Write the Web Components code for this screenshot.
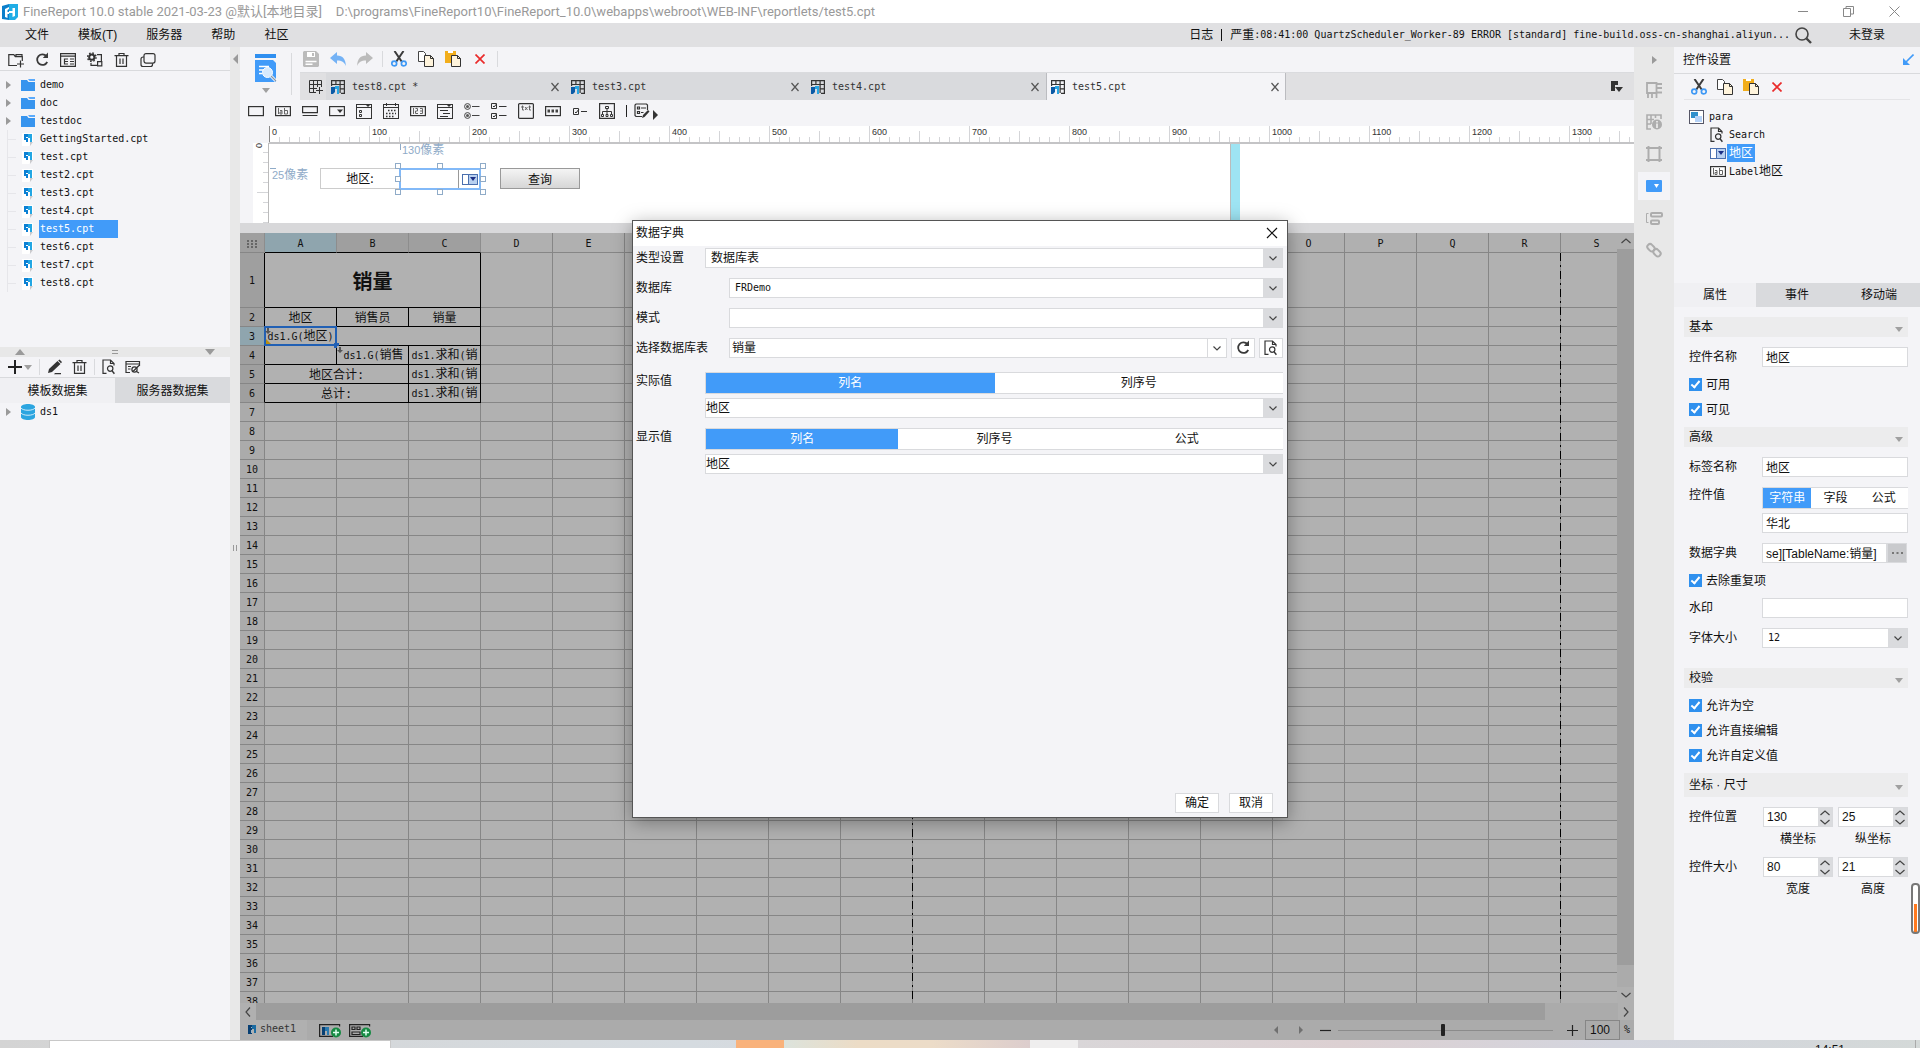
<!DOCTYPE html>
<html lang="zh-CN">
<head>
<meta charset="utf-8">
<title>FineReport 10.0</title>
<style>
html,body{margin:0;height:100%;overflow:hidden}
body{font:12px/16px "Liberation Sans","Noto Sans CJK SC",sans-serif;color:#111;--mono:10px/16px "DejaVu Sans Mono","Noto Sans CJK SC",monospace;--blue:#419bf9;--panel:#f4f4f7;--line:#d9dadd}
</style>
</head>
<body>
<fine-report-app></fine-report-app>
<script>
const BASE = `
*,*::before,*::after{box-sizing:border-box}
:host{display:block}
button,input,select{font:inherit;color:inherit;margin:0;padding:0;border:0;background:none;border-radius:0;outline:0;min-width:0}
button{display:flex;align-items:center;justify-content:center}
x-icon{flex:none}
.mono{font:var(--mono)}
.cjk{font-size:12px}
`;
const CONTROLS = `
.box{height:20px;border:1px solid var(--line);background:#fff;padding:0 3px;width:100%}
.combo{display:grid;height:20px;border:1px solid var(--line);background:#fff;flex:1;min-width:0}
.combo select{grid-area:1/1;appearance:none;width:100%;height:18px;padding:0 24px 0 5px}
.combo i{grid-area:1/1;justify-self:end;width:19px;height:18px;background:#dadbde;pointer-events:none;display:flex;align-items:center;justify-content:center}
.combo.plain i{background:#fff;border-left:1px solid var(--line)}
`;
function define(name, css, html, after){
  const tpl = document.createElement('template');
  customElements.define(name, class extends HTMLElement{
    connectedCallback(){
      if(this.shadowRoot) return;
      const root = this.attachShadow({mode:'open'});
      tpl.innerHTML = `<style>${BASE}${css}</style>` + (typeof html === 'function' ? html(this) : html);
      root.append(tpl.content.cloneNode(true));
      if(after) after(root, this);
    }
  });
}

/* ---------- icons ---------- */
const doc = '<path fill="#fff" d="M1 0h11v9l-4 4H1z"/><path fill="#c9c9cc" d="M9 9h3l-3 4z"/><path fill="#0b80d4" d="M3 1h4v3H5v1h2v4H5V7H3z"/><path fill="#22a6e3" d="M7 1h4v8H9V5H7z"/>';
const frm = '<rect x=".5" y="1.5" width="15" height="14" fill="none" stroke="#333"/>';
const ICON = {
logo:[16,16,'<path fill="#0b7fcb" d="M0 2 7 0v16l-7-1z"/><path fill="#20ade6" d="M7 0h9v13l-3 3H7z"/><path fill="#fff" d="M3 5l4-2v2l-1.500 1v2H7v2H5.500v4L3 13zM7 7h3.500V4H13v8l-2.500 1V9H7z"/>'],
minilogo:[10,10,'<path fill="#073f73" d="M0 1h4v9H0z"/><path fill="#1a6ba2" d="M4 1h4v8H6V5H4z"/><path fill="#9fb5c2" d="M3 3h1v1H3zM3 6h1v3H3z"/>'],
newdir:[16,16,'<path fill="none" stroke="#333" stroke-width="1.200" d="M9 13.500H.8V2.600h5l1.500 2h7V9M8 4.600V2.600h6v2M12.500 8.500v7M9 12h7"/>'],
refresh:[14,16,'<path fill="none" stroke="#3a3a3a" stroke-width="1.800" d="M11.500 4.200A5.300 5.300 0 1 0 12.200 10"/><path fill="#3a3a3a" d="M13 .500v5.500H7.800z"/>'],
list:[16,16,'<path fill="none" stroke="#333" stroke-width="1.200" d="M.6 1.600h14.800v12.800H.6zM.6 4.200h14.800M4.500 6.500v6M4.500 7h3.500M4.500 9.500h3.500M4.500 12h3.500M10 7h4M10 9.500h4M10 12h4"/>'],
gear:[16,16,'<circle cx="4.800" cy="5.200" r="2.600" fill="none" stroke="#333" stroke-width="2"/><circle cx="4.800" cy="5.200" r="4.200" fill="none" stroke="#333" stroke-width="1.500" stroke-dasharray="1.600 1.700"/><path fill="none" stroke="#333" stroke-width="1.200" d="M10 2.600h4.400v7M4 11v2.400h6.500M10.600 9.600h4.200v4.200h-4.200z"/>'],
trash:[15,16,'<path fill="none" stroke="#333" stroke-width="1.200" d="M.5 3.600h14M5 3.500v-2h5v2M2.500 4v10.400h10V4M6 6.500v5.500M9 6.500v5.500"/>'],
copies:[16,16,'<rect x="4" y="1.600" width="11" height="9.500" rx="2" fill="none" stroke="#333" stroke-width="1.200"/><path fill="none" stroke="#333" stroke-width="1.200" d="M4 5H3a2 2 0 0 0-2 2v5.500a2 2 0 0 0 2 2h7.500a2 2 0 0 0 2-2v-1.200"/>'],
folder:[14,12,'<path fill="#3794ee" d="M0 1h6l1.500 2H14v9H0z"/><path fill="#5aaafc" d="M7 0h7v2H8.500z"/>'],
doc:[13,13,doc],
tri:[5,8,'<path fill="#9a9a9a" d="M0 0l5 4-5 4z"/>'],
triG:[5,8,'<path fill="#707070" d="M0 0l4 4-4 4z"/>'],
triL:[5,10,'<path fill="#9a9a9a" d="M5 0v10L0 5z"/>'],
triU:[10,6,'<path fill="#9a9a9a" d="M0 6l5-6 5 6z"/>'],
triD:[10,6,'<path fill="#9a9a9a" d="M0 0h10L5 6z"/>'],
triDs:[8,5,'<path fill="#a0a0a0" d="M0 0h8L4 5z"/>'],
eq:[6,4,'<path stroke="#999" d="M0 .5h6M0 3.500h6"/>'],
bars:[4,6,'<path stroke="#999" d="M.5 0v6M3.500 0v6"/>'],
plus:[14,14,'<path stroke="#222" stroke-width="2" d="M7 0v14M0 7h14"/>'],
pencil:[16,16,'<path fill="#333" d="M1 14l1-4 8.500-8 3 3L5 13z"/><path fill="#333" d="M11.200 1.500l1.300-1 2.500 2.500-1 1.300zM8 14h6v1.200H7z"/>'],
docfind:[14,16,'<path fill="none" stroke="#333" stroke-width="1.200" d="M4.500 14.400H1V1h7.500l3.500 3.500v2M8.500 1v3.500H12"/><circle cx="8.200" cy="9.600" r="2.700" fill="none" stroke="#333" stroke-width="1.200"/><path stroke="#333" stroke-width="1.400" d="M10 11.700l2.400 3"/>'],
panelgear:[16,16,'<path fill="none" stroke="#333" stroke-width="1.200" d="M5 13.500H1v-11h13.500V7M1 5h13.500M3 7.500h3M3 10h2.500"/><circle cx="9.500" cy="10.500" r="2.600" fill="none" stroke="#333" stroke-width="1.200"/><path stroke="#333" stroke-width="1.300" d="M8 12.500l6-6M11.500 12.500l2.500 1.500"/>'],
db:[14,16,'<path fill="#2ba5e0" d="M0 3c0-4 14-4 14 0v10c0 4-14 4-14 0z"/><path fill="none" stroke="#cfeafa" d="M0 4c2 3 12 3 14 0M0 9c2 3 12 3 14 0"/>'],
preview:[22,30,'<path fill="#2f8ff0" d="M0 0h21v4H0z"/><path fill="#419bf9" d="M0 6h18l3 3v19H0z"/><path stroke="#fff" stroke-width="1.500" d="M4 12.500h10M4 16h5M4 19.500h3"/><circle cx="12.500" cy="18.500" r="5" fill="#d6e9fd" stroke="#fff"/><path stroke="#fff" stroke-width="3" d="M16 22l5 5"/><path stroke="#8a98a8" stroke-width="1.200" d="M16 22l5 5"/>'],
save:[16,16,'<path fill="#bbb" d="M0 1l1-1h12l3 3v12l-1 1H1l-1-1z"/><path fill="#fff" d="M4 1h8v5H4z"/><path fill="#bbb" d="M9 2h2v3H9z"/><path stroke="#fff" stroke-width="1.500" d="M2.500 10.500h11M2.500 13.200h7"/>'],
undo:[16,16,'<path fill="#74b2f5" d="M0 7l7-6v3.500c6 0 8.500 4 9 10.500-2-4-4-5.500-9-5.500V13z"/>'],
redo:[16,16,'<path fill="#bbb" d="M16 7L9 1v3.500C3 4.500.5 8.500 0 15c2-4 4-5.500 9-5.500V13z"/>'],
cut:[16,16,'<path stroke="#3b3b3b" stroke-width="2" d="M3.500 0l7.500 11M12.500 0L5 11"/><circle cx="3.200" cy="12.500" r="2.400" fill="none" stroke="#3f99f5" stroke-width="1.700"/><circle cx="12.800" cy="12.500" r="2.400" fill="none" stroke="#3f99f5" stroke-width="1.700"/>'],
copy:[16,16,'<path fill="#fff" stroke="#444" d="M.5.5h5l2 2v8h-7z"/><path fill="#fff4dc" stroke="#333" d="M6.500 4.500h6l3 3v8h-9z"/><path fill="none" stroke="#333" d="M12.500 4.500v3h3"/>'],
paste:[16,16,'<path fill="#f2ae1c" d="M0 0h11v12H0z"/><path fill="#fff" d="M3 0h5v2H3z"/><path fill="#fff4dc" stroke="#333" d="M6.500 4.500h6l3 3v8h-9z"/><path fill="none" stroke="#333" d="M12.500 4.500v3h3"/>'],
del:[10,10,'<path stroke="#ea2b2b" stroke-width="1.700" d="M.5.500l9 9M9.500.500l-9 9"/>'],
addtab:[14,14,'<path fill="none" stroke="#333" d="M7 12.500H.5V.500h12V7M.5 4.500h12M.5 8.500H8M4.500.500v12M8.500.500V7M10.500 7v7M7 10.500h7"/>'],
sheet:[14,14,'<path fill="none" stroke="#333" stroke-width="1.200" d="M.6 6V.600h12.800v12.800H10M.6 4.500h12.800M4.900.600v4M9.100.600V13M9 8.900h4.400"/><path fill="#0b5aa6" d="M0 7h4v5l-2 2H0z"/><path fill="#29a6e3" d="M4 6h4v8H6V9H4z"/>'],
close:[10,10,'<path stroke="#555" stroke-width="1.200" d="M1.500 1l7 8M8.500 1l-7 8"/>'],
tabmenu:[12,12,'<path fill="#333" d="M0 0h7v4H4v6H0z"/><path fill="#333" d="M4 6h8L8 11z"/>'],
w_box:[16,16,'<rect x=".6" y="3.600" width="14.800" height="9" fill="none" stroke="#333" stroke-width="1.200"/>'],
w_label:[16,16,'<rect x=".6" y="3.600" width="14.800" height="9" fill="none" stroke="#333" stroke-width="1.200"/><path fill="none" stroke="#666" d="M3.500 5v6M5 7.500h2V11H5V9h2M9.500 5v6h3V7.500h-3"/>'],
w_pass:[16,16,'<path fill="none" stroke="#333" stroke-width="1.200" d="M.6 3.600h14.800v6H.6zM.6 12.500h14.800"/>'],
w_combo:[16,16,'<rect x=".6" y="3.600" width="14.800" height="9" fill="none" stroke="#333" stroke-width="1.200"/><path fill="#333" d="M8 6.500h6L11 10z"/>'],
w_tree:[16,17,frm+'<path fill="none" stroke="#333" d="M.5 4.500h15M3.500 7.500h2v2h-2zM3.500 11.500h2v2h-2z"/><path fill="#333" d="M10 2h4l-2 2z"/>'],
w_date:[16,17,frm+'<path stroke="#333" d="M.5 4.500h15M3.500 0v3M12.500 0v3"/><path stroke="#333" stroke-width="1.500" stroke-dasharray="1.500 1.500" d="M5 7.500h8M3 10.500h10M3 13.500h8"/>'],
w_num:[16,16,'<rect x=".6" y="3.600" width="14.800" height="9" fill="none" stroke="#333" stroke-width="1.200"/><path fill="none" stroke="#666" d="M3.500 5v6M5.500 5.500h2v2.500h-2v2.500h2.500M10 5.500h2.500v5H10M10 8h2.500"/>'],
w_view:[16,17,frm+'<path stroke="#333" d="M.5 4.500h15M3 7.500h8M6 10.500h7M3 13.500h8"/><path fill="#333" d="M10 2h4l-2 2z"/>'],
w_radio:[16,16,'<g fill="none" stroke="#444"><circle cx="3.500" cy="3.500" r="2.900"/><circle cx="3.500" cy="12.500" r="2.900"/><path d="M8 3.500h7.500M8 12.500h7.500"/></g><g fill="#555"><circle cx="3.500" cy="3.500" r="1.500"/><circle cx="3.500" cy="12.500" r="1.500"/></g>'],
w_checks:[16,16,'<path fill="none" stroke="#333" d="M.5.500h5v5h-5zM.5 10.500h5v5h-5zM2 3l1 1 2.500-3M2 13l1 1 2.500-3M8 3.500h7.500M8 12.500h7.500"/>'],
w_text:[16,16,'<rect x=".6" y=".6" width="14.800" height="14.800" rx="1" fill="none" stroke="#333" stroke-width="1.200"/><path fill="none" stroke="#666" d="M4.500 2.500V7H6M3 4h3M7 4l2.500 3M9.500 4L7 7M11.500 2.500V7H13M10.500 4H13"/>'],
w_pwd:[16,16,'<rect x=".6" y="3.600" width="14.800" height="9" fill="none" stroke="#333" stroke-width="1.200"/><path stroke="#444" stroke-width="3" stroke-dasharray="2.500 1.500" d="M2.500 8h11"/>'],
w_check:[16,16,'<path fill="none" stroke="#333" d="M1.500 5.500h5v6h-5zM3 9l1 1 3-4M9 8.500h6"/>'],
w_org:[16,16,'<rect x=".6" y=".6" width="14.800" height="14.800" fill="none" stroke="#333" stroke-width="1.200"/><path fill="none" stroke="#333" d="M6.500 3.500h3v2h-3zM8 5.500V11M3.500 11V8.500h9V11M2.500 11.500h2v2h-2zM7 11.500h2v2H7zM11.500 11.500h2v2h-2z"/>'],
w_form:[16,16,'<path fill="none" stroke="#333" stroke-width="1.200" d="M8 13.500H2l-1-1V2l1-1h10.500l1 1v5M3.500 4h2v2h-2zM7 5h5M3.500 8.500h2v2h-2zM7 9.500h2.500"/><path fill="#333" d="M8 15l1-3 5-5 1.500 1.500-5 5.500z"/>'],
r_tri:[5,10,'<path fill="#333" d="M0 0l5 5-5 5z"/>'],
chev:[8,5,'<path fill="none" stroke="#444" stroke-width="1.200" d="M.5.500L4 4 7.500.500"/>'],
chevU:[10,6,'<path fill="none" stroke="#444" stroke-width="1.200" d="M.5 5L5 1l4.500 4"/>'],
chevD:[10,6,'<path fill="none" stroke="#444" stroke-width="1.200" d="M.5 1L5 5l4.500-4"/>'],
chevL:[6,10,'<path fill="none" stroke="#444" stroke-width="1.200" d="M5 .500L1 5l4 4.500"/>'],
chevR:[6,10,'<path fill="none" stroke="#444" stroke-width="1.200" d="M1 .500L5 5 1 9.500"/>'],
x:[12,12,'<path stroke="#111" stroke-width="1.200" d="M1 1l10 10M11 1L1 11"/>'],
winmin:[10,11,'<path stroke="#888" d="M0 5.500h10"/>'],
winmax:[11,11,'<path fill="none" stroke="#888" d="M.5 2.500h7v8h-7zM3 2V.500h7.500V8H8"/>'],
winx:[11,11,'<path stroke="#888" d="M.5.500l10 10M10.500.500l-10 10"/>'],
search:[17,17,'<circle cx="7" cy="7" r="6" fill="none" stroke="#444" stroke-width="1.600"/><path stroke="#444" stroke-width="2.400" d="M11.500 11.500l4.500 4.500"/>'],
pin:[12,12,'<path stroke="#419bf9" stroke-width="1.600" d="M11.500.500L3 9"/><path fill="#419bf9" d="M1 4v7h7z"/>'],
para:[15,15,'<rect x=".5" y=".5" width="14" height="13" fill="#fff" stroke="#556"/><path fill="#2f8fcc" d="M2 2h7v6H2z"/><path fill="#b5d2f8" d="M6 6h7v6H6z"/>'],
combosel:[16,11,'<rect x=".5" y=".5" width="15" height="10" fill="#fff" stroke="#4a6fae"/><path fill="#b8d0f0" stroke="#4a6fae" d="M6.500.500h9v10h-9z"/><path fill="#1b2f86" d="M8 3h6l-3 4z"/>'],
lab:[16,11,'<rect x=".6" y=".6" width="14.800" height="9.800" fill="#fff" stroke="#333" stroke-width="1.200"/><path fill="none" stroke="#666" d="M3.500 2v6.500M5 4.500h2v4H5V6.500h2M9.500 2v6.500h3v-4h-3"/>'],
s1:[16,16,'<path fill="none" stroke="#adadad" stroke-width="1.800" d="M1 11V1h9.500v10zM10 2h6M10 6h6M10 10.500h6M2 11v5M6 11v5M10.500 11v5"/>'],
s2:[16,16,'<path fill="none" stroke="#adadad" stroke-width="1.600" d="M5 15H1V1h14v4M1 5.500h7M5 1v9M1 10h4M9.500 1v3"/><circle cx="11" cy="10.500" r="5" fill="#adadad"/><path stroke="#e8e8e8" stroke-width="1.800" d="M11 7v1.500M11 9.500V14"/>'],
s3:[16,16,'<path fill="none" stroke="#adadad" stroke-width="2" d="M2.500 0v16M13.500 0v16M0 2h16M0 14h16"/>'],
s4:[16,12,'<rect width="16" height="12" rx="1" fill="#419bf9"/><path fill="#fff" d="M8 4h5l-2.500 4z"/>'],
s5:[17,13,'<path fill="none" stroke="#adadad" d="M2.500 1.500h-2v9h2"/><rect x="5" y="1" width="11" height="3.500" rx="1" fill="none" stroke="#adadad" stroke-width="2"/><rect x="5" y="8.500" width="8" height="3.500" rx="1" fill="none" stroke="#adadad" stroke-width="2"/>'],
s6:[16,16,'<g fill="none" stroke="#adadad" stroke-width="2"><rect x="1" y="3" width="8" height="5.500" rx="2.700" transform="rotate(45 5 5.700)"/><rect x="7" y="8" width="8" height="5.500" rx="2.700" transform="rotate(45 11 10.700)"/></g>'],
dots:[10,8,'<path fill="#666" d="M0 0h2v2H0zM4 0h2v2H4zM8 0h2v2H8zM0 3h2v2H0zM4 3h2v2H4zM8 3h2v2H8zM0 6h2v2H0zM4 6h2v2H4zM8 6h2v2H8z"/>'],
addsheet:[22,15,'<path fill="none" stroke="#222" stroke-width="1.200" d="M14 13.400H.6V1.600h20v2"/><path fill="#073f73" d="M3 4h3v8H3z"/><path fill="#2a7ab0" d="M6 4h4v8H8V8H6z"/><circle cx="17" cy="9.500" r="5" fill="#168a43"/><path stroke="#dfe" stroke-width="1.500" d="M17 6.500v6M14 9.500h6"/>'],
addform:[22,15,'<path fill="none" stroke="#222" stroke-width="1.200" d="M14 13.400H.6V1.600h20v2M3 4h3v2.500H3zM8 4h3v2.500H8zM3 9h8v2.500H3z"/><circle cx="17" cy="9.500" r="5" fill="#168a43"/><path stroke="#dfe" stroke-width="1.500" d="M17 6.500v6M14 9.500h6"/>'],
minus:[11,11,'<path stroke="#222" stroke-width="1.200" d="M0 5.500h11"/>'],
plusS:[11,11,'<path stroke="#222" stroke-width="1.200" d="M0 5.500h11M5.500 0v11"/>'],
ell:[11,3,'<path fill="#777" d="M0 0h2v2H0zM4.500 0h2v2h-2zM9 0h2v2H9z"/>'],
expandmark:[6,6,'<path fill="#555" d="M2 0h2v3h2L3 6 0 3h2z"/>']
};
define('x-icon', ':host{display:inline-flex}svg{display:block}', el => {
  const [w,h,p] = ICON[el.getAttribute('name')];
  return `<svg width="${w}" height="${h}" viewBox="0 0 ${w} ${h}" aria-hidden="true">${p}</svg>`;
});
const ic = n => `<x-icon name="${n}"></x-icon>`;
const ib = (n,t='') => `<button type="button" aria-label="${n}" ${t}>${ic(n)}</button>`;

/* ---------- small controls ---------- */
define('ui-check', `label{display:flex;align-items:center;gap:4px;height:13px}
input{appearance:none;width:13px;height:13px;background:#2f90ee;display:grid;place-items:center;flex:none}
input:checked::after{content:"";width:5px;height:9px;border:solid #fff;border-width:0 2px 2px 0;transform:rotate(40deg);margin-bottom:2px}`,
'<label><input type="checkbox" checked><slot></slot></label>');

define('ui-segment', `:host{flex:1;min-width:0}div{display:flex;height:22px;border:1px solid var(--line);border-right:0;background:#fff}
button{flex:1}button[aria-pressed=true]{background:var(--blue);color:#fff}`,
el => '<div role="group">' + el.getAttribute('items').split(',').map((t,i)=>`<button type="button" aria-pressed="${i===0}">${t}</button>`).join('') + '</div>');

define('ui-spin', `:host{flex:1;min-width:0}.s{display:flex;height:20px;border:1px solid var(--line);background:#fff}
input{flex:1;width:20px;padding-left:3px;appearance:textfield}input::-webkit-inner-spin-button{appearance:none}
.b{display:flex;flex-direction:column;width:14px;background:#dadbde}.b button{flex:1}
label{display:block;text-align:center;margin-top:4px}`,
el => `<div class="s"><input id="n" type="number" value="${el.getAttribute('value')}"><div class="b">${ib('chevU')}${ib('chevD')}</div></div><label for="n">${el.getAttribute('label')}</label>`);

define('tree-item', `:host{display:flex;height:18px;align-items:center;font:var(--mono)}
.a{width:16px;display:flex;flex:none;padding-left:6px}:host([leaf]) .a{align-self:stretch;padding:0}
:host([leaf]) .a::before{content:"";flex:1;margin-left:7px;border-left:1px solid #e6e6ea;background:linear-gradient(#e6e6ea,#e6e6ea) 0 9px/100% 1px no-repeat}
.i{width:23px;display:flex;justify-content:center;flex:none}
.t{height:18px;line-height:18px;padding:0 1px}:host([selected]) .t{background:var(--blue);color:#fff;padding-right:24px}`,
el => `<span class="a">${el.hasAttribute('leaf')?'':ic('tri')}</span><span class="i">${ic(el.getAttribute('icon'))}</span><span class="t"><slot></slot></span>`);

define('ui-tabs', `:host{display:flex}button{flex:1;height:100%;background:#d9dadd}button[aria-selected=true]{background:#f0f0f3}`,
el => el.getAttribute('items').split(',').map((t,i)=>`<button type="button" role="tab" aria-selected="${i===0}">${t}</button>`).join(''));

/* ---------- title and menu ---------- */
define('title-bar', `:host{display:flex;height:23px;background:#fff;align-items:center;color:#999;font:13px/18px Roboto,"Noto Sans CJK SC",sans-serif;padding-left:2px}
.n{margin-left:5px}.p{margin-left:14px}.w{margin-left:auto;display:flex;gap:35px;padding-right:20px}`,
`${ic('logo')}<span class="n">FineReport 10.0 stable 2021-03-23 @默认[本地目录]</span><span class="p">D:\\programs\\FineReport10\\FineReport_10.0\\webapps\\webroot\\WEB-INF\\reportlets/test5.cpt</span>
<span class="w">${ib('winmin')}${ib('winmax')}${ib('winx')}</span>`);

define('menu-bar', `:host{display:flex;height:24px;background:#e0e0e2;align-items:center;padding:0 35px 0 25px}
nav{display:flex;gap:29px}.log{margin-left:auto;display:flex;align-items:center;gap:8px}.log i{width:1px;height:12px;background:#111}
.m{display:flex;align-items:center;white-space:nowrap}.u{margin-left:37px}.q{margin-left:5px}`,
`<nav><button>文件</button><button>模板(T)</button><button>服务器</button><button>帮助</button><button>社区</button></nav>
<div class="log"><span>日志</span><i></i><span class="m">严重<span class="mono">:08:41:00 QuartzScheduler_Worker-89 ERROR [standard] fine-build.oss-cn-shanghai.aliyun...</span></span></div>
<span class="q">${ib('search')}</span><button class="u">未登录</button>`);

/* ---------- left side ---------- */
define('file-panel', `:host{height:300px;flex:none}.t{display:flex;gap:11px;height:24px;align-items:center;padding:2px 8px 0;border-bottom:1px solid var(--line);margin-bottom:5px}`,
`<div class="t">${['newdir','refresh','list','gear','trash','copies'].map(n=>ib(n)).join('')}</div>
<tree-item icon="folder">demo</tree-item><tree-item icon="folder">doc</tree-item><tree-item icon="folder">testdoc</tree-item>
${['GettingStarted','test','test2','test3','test4','test5','test6','test7','test8'].map(n=>`<tree-item leaf icon="doc" ${n==='test5'?'selected':''}>${n}.cpt</tree-item>`).join('')}`);

define('dataset-panel', `:host{flex:1}.s{height:10px;background:#e8e8e8;display:flex;align-items:center;justify-content:space-between;padding:0 15px}
.t{display:flex;height:20px;align-items:center;padding:0 8px}.t i{width:1px;height:16px;background:var(--line);margin:0 7px}.t button+button{margin-left:9px}.t button+button.d{margin-left:2px}
ui-tabs{height:26px;border-top:1px solid var(--line)}`,
`<div class="s">${ic('triU')}${ic('eq')}${ic('triD')}</div>
<div class="t">${ib('plus')}${ib('triDs','class="d"')}<i></i>${ib('pencil')}${ib('trash')}<i></i>${ib('docfind')}${ib('panelgear')}</div>
<ui-tabs items="模板数据集,服务器数据集"></ui-tabs><tree-item icon="db">ds1</tree-item>`);

/* ---------- designer ---------- */
define('designer-toolbar', `:host{display:flex;height:53px;background:var(--panel)}
.p{width:60px;display:flex;flex-direction:column;align-items:center;justify-content:flex-start;padding:7px 15px 0 6px;gap:4px;position:relative;border:0}
.p::after{content:"";position:absolute;left:51px;top:6px;width:1px;height:42px;background:var(--line)}
.r{flex:1;min-width:0}.t{display:flex;height:25px;align-items:center;gap:11px;padding:0 3px 1px}.t i{width:1px;height:16px;background:var(--line);margin:0 -3px 0 -2px}
.tabs{display:flex;height:28px;background:#e0e0e2;border-top:1px solid #dadbde}
.n{width:26px;padding-left:6px}.tab{flex:0 1 240px;display:flex;align-items:center;background:#d9dadd;color:#333;padding:0 6px 0 5px}
.tab.on{background:var(--panel);border:solid #bbbcc0;border-width:0 1px;padding:0 5px 0 4px}.tab x-icon{margin-right:7px}.tab button{margin-left:auto}.tab button x-icon{margin:0}.m{margin-left:auto;margin-right:11px}`,
`<button class="p" aria-label="预览">${ic('preview')}${ic('triDs')}</button>
<div class="r"><div class="t">${ib('save')}${ib('undo')}${ib('redo')}<i></i>${ib('cut')}${ib('copy')}${ib('paste')}${ib('del','style="width:16px"')}<i></i></div>
<div class="tabs">${ib('addtab','class="n"')}${['test8.cpt *','test3.cpt','test4.cpt','test5.cpt'].map((t,i)=>`<div class="tab mono ${i===3?'on':''}">${ic('sheet')}${t}${ib('close')}</div>`).join('')}${ib('tabmenu','class="m"')}</div></div>`);

define('widget-toolbar', `:host{display:flex;height:26px;align-items:center;gap:11px;padding:0 8px 4px;background:var(--panel)}i{width:1px;height:12px;background:#222;margin-right:-4px}.a{margin-left:-8px;padding-top:8px}`,
['w_box','w_label','w_pass','w_combo','w_tree','w_date','w_num','w_view','w_radio','w_checks','w_text','w_pwd','w_check','w_org'].map(n=>ib(n)).join('')+'<i></i>'+ib('w_form')+ib('r_tri','class="a"'));

define('form-designer', `:host{display:grid;grid-template:17px 80px/29px 1fr;background:var(--panel);overflow:hidden;font:9px/13px "Liberation Sans",sans-serif}
.h{grid-area:1/2;overflow:hidden;display:flex;border-bottom:1px solid #c4c4c6;
background:repeating-linear-gradient(90deg,#d4d5d8 0 1px,transparent 1px 10px) 0 100%/auto 5px repeat-x,repeating-linear-gradient(90deg,#d4d5d8 0 1px,transparent 1px 50px) 0 100%/auto 11px repeat-x,#fff}
.h span{flex:0 0 100px;border-left:1px solid #d4d5d8;padding-left:2px;color:#333}.h span:first-child{border-color:#888}
.v{grid-area:2/1;margin-left:13px;display:flex;justify-content:flex-start;border-right:1px solid #bbb;color:#333;
background:repeating-linear-gradient(#d4d5d8 0 1px,transparent 1px 10px) 100% 9px/5px 100% no-repeat,linear-gradient(#d4d5d8,#d4d5d8) 100% 49px/11px 1px no-repeat,#fff}
.v span{writing-mode:vertical-rl;line-height:11px}
.c{grid-area:2/2;background:#fff;position:relative;border-top:1px solid #c4c4c6}
.c>*{position:absolute}
.page{left:0;top:0;width:962px;height:100%;border-right:1px solid #bbb}.edge{left:962px;top:0;width:9px;height:100%;background:#9ee4f3}
.px{color:#8fabc8;font:11px/12px "Liberation Sans","Noto Sans CJK SC",sans-serif;white-space:nowrap}.px b{font:12px/12px "Noto Sans CJK SC",sans-serif}
.px.x{left:130px;top:-1px;padding-left:3px;background:linear-gradient(#8fabc8,#8fabc8) 1px 1px/1px 6px no-repeat}.px.y{left:1px;top:24px;padding:0 2px;background:linear-gradient(#8fabc8,#8fabc8) 0 0/6px 1px no-repeat}
.lab{left:51px;top:24px;width:80px;height:21px;border:1px solid #ccc;text-align:center;line-height:18px;font-size:12px;font-family:"Noto Sans CJK SC",sans-serif}
.sel{left:130px;top:24px;width:82px;height:22px;border:2px solid #82b9f8;background:#fff;display:flex;justify-content:flex-end;align-items:center}
.sel b{border-left:1px solid #999;height:18px;display:flex;align-items:center;padding:0 1px 0 3px}
.hd{width:6px;height:6px;border:1px solid #8fabc8;background:#fff}
.q{left:231px;top:24px;width:80px;height:21px;border:1px solid #999;background:linear-gradient(#f4f4f4,#d6d6d6);font:12px/16px "Noto Sans CJK SC",sans-serif}`,
`<div class="h">${Array.from({length:14},(_,i)=>`<span>${i*100}</span>`).join('')}</div><div class="v"><span>0</span></div>
<div class="c"><div class="page"></div><div class="edge"></div><span class="px x">130<b>像素</b></span><span class="px y">25<b>像素</b></span><div class="lab">地区:</div><div class="sel"><b>${ic('combosel')}</b></div>
${[[126,20],[168,20],[211,20],[126,33],[211,33],[126,46],[168,46],[211,46]].map(([x,y])=>`<i class="hd" style="left:${x}px;top:${y-1}px"></i>`).join('')}
<button class="q">查询</button></div>`);

define('report-sheet', `:host{flex:1;min-height:0;display:grid;grid-template:1fr 17px/1fr 17px;background:#ababab;color:#111}
.g{overflow:hidden;position:relative}
table{table-layout:fixed;border-collapse:separate;border-spacing:0;width:1393px}
th,td{padding:2px 0 0;border:solid #868686;border-width:0 1px 1px 0;height:19px;overflow:hidden;white-space:nowrap;font:var(--mono);text-align:center;background:#b1b1b1}
thead th{height:20px;background:#b0b0b0;padding-top:3px}
tbody th{background:#ababab}th.h{background:#9f9f9f}th.s{background:#8fa5ae}
thead th.h,thead th.s{border-right-color:#8d8d8d}.k{border-color:#000}thead .kb{border-bottom-color:#000}.kr{border-right-color:#000}
thead x-icon{vertical-align:middle}
.z{font-size:12px}span.z{line-height:12px}.t1{font-size:20px;line-height:28px;font-weight:600;font-family:"Noto Sans CJK SC",sans-serif}
.a3{position:relative;overflow:visible}.a3::before{content:"";position:absolute;left:-1px;top:-1px;width:73px;height:20px;border:2px solid #2160b4}
.a3::after{content:"";position:absolute;right:-3px;bottom:-3px;width:5px;height:5px;background:#2160b4}
.mk{position:absolute;left:1px;bottom:1px;width:5px;height:5px;background:#b98f14;clip-path:polygon(0 0,100% 100%,0 100%)}
.up{position:absolute;left:0;top:1px;display:flex}
.rel{position:relative;padding-left:2px}
.pg{position:absolute;top:20px;bottom:0;width:1px;background:repeating-linear-gradient(#000 0 8px,transparent 8px 12px,#000 12px 14px,transparent 14px 18px)}
.vs{display:flex;flex-direction:column}.vs button,.hs button{background:#b0b0b0;flex:none}.vs button{height:16px}.vs i{flex:0 1 716px;margin-bottom:auto;background:#9d9d9d}
.hs{grid-column:1/3;display:flex}.hs button{width:16px}.hs i{flex:0 1 1289px;margin-right:auto;background:#9d9d9d}`,
() => {
  const cols = 'ABCDEFGHIJKLMNOPQRS'.split('');
  const m = (a,b='',c='') => `${a}<span class="z">${b}</span>${c}`;
  const head = cols.map((c,i)=>`<th class="${i===0?'s kb':i<3?'h kb':''}">${c}</th>`).join('');
  const rest = Array(16).fill('<td></td>').join('');
  const top = [
    `<td class="k t1" colspan="3">销量</td>`,
    `<td class="k z">地区</td><td class="k z">销售员</td><td class="k z">销量</td>`,
    `<td class="k a3">${m('ds1.G(','地区',')')}<i class="mk"></i><span class="up">${ic('expandmark')}</span></td><td class="k" colspan="2"></td>`,
    `<td class="k"></td><td class="k rel"><span class="up">${ic('expandmark')}</span>${m('ds1.G(','销售')}</td><td class="k">${m('ds1.','求和','(')}<span class="z">销</span></td>`,
    `<td class="k z" colspan="2">地区合计:</td><td class="k">${m('ds1.','求和','(')}<span class="z">销</span></td>`,
    `<td class="k z" colspan="2">总计:</td><td class="k">${m('ds1.','求和','(')}<span class="z">销</span></td>`];
  let body = '';
  for(let r=1;r<=38;r++){
    body += `<tr ${r===1?'style="height:55px"':''}><th class="${r===3?'s kr':r<7?'h kr':''}">${r}</th>${r<7?top[r-1]:'<td></td><td></td><td></td>'}${rest}</tr>`;
  }
  return `<div class="g"><table><colgroup><col style="width:25px">${'<col style="width:72px">'.repeat(19)}</colgroup><thead><tr><th class="h">${ic('dots')}</th>${head}</tr></thead><tbody>${body}</tbody></table>
<i class="pg" style="left:672px"></i><i class="pg" style="left:1320px"></i></div>
<div class="vs">${ib('chevU')}<i></i>${ib('chevD')}</div><div class="hs">${ib('chevL')}<i></i>${ib('chevR')}</div>`;
});

define('sheet-status', `:host{display:flex;height:20px;background:#ababab;align-items:center;color:#111}
.s{display:flex;align-items:center;justify-content:flex-start;gap:2px;height:20px;width:67px;padding:0 0 2px 8px;background:#b0b0b0;color:#333}.a{margin-left:12px}.b{margin-left:8px}
.z{margin-left:auto;display:flex;align-items:center}.z>*{margin-left:7px}.l{transform:scaleX(-1)}.z>.mi{margin-left:10px}.z>.pl{margin-left:14px}
input[type=range]{appearance:none;width:215px;height:12px}input::-webkit-slider-runnable-track{height:1px;background:#8b8b8b}
input::-webkit-slider-thumb{appearance:none;width:4px;height:12px;border-radius:1px;background:#222;margin-top:-6px}
.n{width:35px;height:20px;border:1px solid #868686;padding-left:4px}.z .pc{margin:0 4px;width:6px}.tr{width:18px}`,
`<button class="s mono">${ic('minilogo')}sheet1</button>${ib('addsheet','class="a"')}${ib('addform','class="b"')}
<div class="z">${ib('triG','class="l tr"')}${ib('triG','class="tr"')}${ib('minus','class="mi"')}<input type="range" aria-label="缩放" min="0" max="100" value="49">${ib('plusS','class="pl"')}<input class="n" aria-label="缩放比例" value="100"><span class="pc mono">%</span></div>`);

define('designer-area', `:host{flex:1;min-width:0;display:flex;flex-direction:column}.g{height:10px;background:#d8d8da;flex:none}`,
'<designer-toolbar></designer-toolbar><widget-toolbar></widget-toolbar><form-designer></form-designer><div class="g"></div><report-sheet></report-sheet><sheet-status></sheet-status>');

/* ---------- right side ---------- */
define('side-rail', `:host{width:40px;background:#e8e8e8;display:flex;flex-direction:column;align-items:center;gap:4px}button{width:32px;height:28px}.on{background:var(--panel)}.f{height:25px;width:8px}`,
ib('tri','class="f"')+['s1','s2','s3','s4','s5','s6'].map(n=>ib(n,n==='s4'?'class="on"':'')).join(''));

define('widget-panel', CONTROLS+`:host{width:246px;background:var(--panel)}
.hd{display:flex;height:27px;align-items:center;justify-content:space-between;padding:0 6px 0 9px;border-bottom:1px solid var(--line)}
.t{display:flex;gap:10px;align-items:center;height:26px;margin:0 10px 8px;padding:0 7px;border-bottom:1px solid #e4e4e7}
.tree{height:175px}.r{display:flex;align-items:center;height:18px;font:var(--mono);padding-left:15px;gap:4px}.r.c{padding-left:36px;gap:1px}.r.c x-icon{width:17px}.r span{padding:0 1px;line-height:18px}
.r .on{background:var(--blue);color:#fff;font-size:12px;padding:0 2px;margin-left:-1px}
ui-tabs{height:24px}
.b{padding:10px 12px 0 10px}
.sec{display:flex;align-items:center;justify-content:space-between;height:20px;background:#ececed;padding:0 5px;margin-bottom:10px}.sec x-icon{padding-top:4px}
.f{display:flex;align-items:center;margin-bottom:10px;padding-left:5px}.f>label,.f>.lb{width:73px;flex:none}.f.top{align-items:flex-start}
.box{padding-bottom:1px}
.st{flex:1;display:flex;flex-direction:column;gap:4px;min-width:0}.st ui-segment{flex:none}
ui-check{padding-left:5px;margin:0 0 12px}ui-check.e{margin-bottom:11px}
.dd{display:flex;flex:1;min-width:0;padding-right:1px}.dd button{width:20px;background:#c9cacd;border:1px solid var(--line);flex:none}
.f.sp{padding-right:0;margin-bottom:10px;align-items:flex-start}.sp .lb{padding-top:2px;width:74px}.sp ui-spin+ui-spin{margin-left:5px}`,
`<div class="hd"><span>控件设置</span>${ib('pin')}</div><div class="t">${ib('cut')}${ib('copy')}${ib('paste')}${ib('del','style="width:16px"')}</div>
<div class="tree"><div class="r">${ic('para')}<span>para</span></div><div class="r c">${ic('docfind')}<span>Search</span></div><div class="r c">${ic('combosel')}<span class="on">地区</span></div><div class="r c">${ic('lab')}<span>Label<span class="cjk" style="padding:0">地区</span></span></div></div>
<ui-tabs items="属性,事件,移动端"></ui-tabs>
<div class="b"><div class="sec">基本${ic('triDs')}</div>
<div class="f" style="margin-bottom:11px"><label for="a">控件名称</label><input class="box" id="a" value="地区"></div>
<ui-check>可用</ui-check><ui-check class="e">可见</ui-check>
<div class="sec">高级${ic('triDs')}</div>
<div class="f"><label for="b">标签名称</label><input class="box" id="b" value="地区"></div>
<div class="f top"><label class="lb" for="c">控件值</label><div class="st"><ui-segment items="字符串,字段,公式"></ui-segment><input class="box" id="c" value="华北"></div></div>
<div class="f" style="margin-bottom:11px"><label for="d">数据字典</label><div class="dd"><input class="box" id="d" value="se][TableName:销量]">${ib('ell')}</div></div>
<ui-check class="e">去除重复项</ui-check>
<div class="f"><label for="e">水印</label><input class="box" id="e"></div>
<div class="f" style="margin-bottom:20px"><label for="g">字体大小</label><div class="combo"><select id="g" class="mono"><option>12</option></select><i>${ic('chev')}</i></div></div>
<div class="sec" style="margin-bottom:11px">校验${ic('triDs')}</div>
<ui-check>允许为空</ui-check><ui-check>允许直接编辑</ui-check><ui-check class="e">允许自定义值</ui-check>
<div class="sec" style="height:24px">坐标 · 尺寸${ic('triDs')}</div>
<div class="f sp"><span class="lb">控件位置</span><ui-spin value="130" label="横坐标"></ui-spin><ui-spin value="25" label="纵坐标"></ui-spin></div>
<div class="f sp"><span class="lb">控件大小</span><ui-spin value="80" label="宽度"></ui-spin><ui-spin value="21" label="高度"></ui-spin></div></div>`);

/* ---------- dialog ---------- */
define('dict-dialog', CONTROLS+`:host{display:flex;flex-direction:column;background:var(--panel);border:1px solid #555;box-shadow:0 4px 18px rgba(0,0,0,.35)}
header{height:25px;background:#fff;display:flex;align-items:center;justify-content:space-between;padding:0 9px 1px 3px;flex:none}
.b{padding:2px 4px 0 3px;flex:1}.f{display:flex;align-items:center;margin-bottom:10px}.f>label,.f>.lb{width:69px;flex:none}.f.w>label{width:93px}
.f.top{align-items:flex-start}.f.top>.lb{padding-top:1px}.st{flex:1;display:flex;flex-direction:column;gap:4px}.st ui-segment{flex:none}.st .combo{flex:none}.st .combo select{padding-left:0}.b4{margin-bottom:14px}
.ib{width:24px;height:20px;background:#fff;border:1px solid var(--line);margin-left:4px;flex:none}
footer{display:flex;justify-content:flex-end;gap:10px;padding:0 14px 4px}footer button{width:44px;height:20px;background:#fff;border:1px solid var(--line)}`,
`<header><span>数据字典</span>${ib('x')}</header>
<div class="b">
<div class="f"><label for="a">类型设置</label><div class="combo"><select id="a"><option>数据库表</option></select><i>${ic('chev')}</i></div></div>
<div class="f w"><label for="b">数据库</label><div class="combo"><select id="b" class="mono"><option>FRDemo</option></select><i>${ic('chev')}</i></div></div>
<div class="f w"><label for="c">模式</label><div class="combo"><select id="c"><option></option></select><i>${ic('chev')}</i></div></div>
<div class="f w b4"><label for="d">选择数据库表</label><div class="combo plain"><select id="d" style="padding-left:2px"><option>销量</option></select><i>${ic('chev')}</i></div>${ib('refresh','class="ib"')}${ib('docfind','class="ib"')}</div>
<div class="f top"><label class="lb" for="e">实际值</label><div class="st"><ui-segment items="列名,列序号"></ui-segment><div class="combo"><select id="e"><option>地区</option></select><i>${ic('chev')}</i></div></div></div>
<div class="f top"><label class="lb" for="g">显示值</label><div class="st"><ui-segment items="列名,列序号,公式"></ui-segment><div class="combo"><select id="g"><option>地区</option></select><i>${ic('chev')}</i></div></div></div>
</div><footer><button>确定</button><button>取消</button></footer>`);

define('task-strip', `:host{display:flex;height:8px;overflow:hidden;background:linear-gradient(90deg,#d4d4d4,#d5dade 30%,#d5dbe0 36%,#d9d6d8 56%,#dcd0d2 70%,#d3d5de 84%,#d4d9d8)}
i{flex:none}.a{width:49px}.b{width:342px;background:#fff;border:1px solid #c8c8c8;border-bottom:0}.c{width:345px}.d{width:48px;background:#f9b27b}.e{width:246px;background:linear-gradient(90deg,#dce3dc,#ecdcc6 30%,#ecdcc8 60%,#dccdcd)}.f{width:48px;background:#efeeee}
span{margin-left:auto;margin-right:70px;padding-top:3px;line-height:14px}.g{width:5px;border-left:1px solid #aaa}`,
'<i class="a"></i><i class="b"></i><i class="c"></i><i class="d"></i><i class="e"></i><i class="f"></i><span>14:51</span><i class="g"></i>');

define('fine-report-app', `:host{display:flex;flex-direction:column;height:100vh;position:relative;background:var(--panel)}
main{flex:1;min-height:0;display:flex}.l{width:230px;display:flex;flex-direction:column;background:var(--panel)}
.gut{width:10px;background:#e8e8e8;display:flex;flex-direction:column;align-items:center;padding-top:7px}.gut x-icon+x-icon{margin-top:481px}
dict-dialog{position:absolute;left:632px;top:220px;width:656px;height:598px}
.fl{position:absolute;right:0;top:883px;width:9px;height:51px;border:2px solid #777;border-radius:4px;background:linear-gradient(#fff 19px,#ff7a1f 19px) 50% 0/3px 100% no-repeat #fff}`,
`<title-bar></title-bar><menu-bar></menu-bar><main><div class="l"><file-panel></file-panel><dataset-panel></dataset-panel></div><div class="gut">${ic('triL')}${ic('bars')}</div><designer-area></designer-area><side-rail></side-rail><widget-panel></widget-panel></main><task-strip></task-strip><dict-dialog></dict-dialog><i class="fl"></i>`);
</script>
</body>
</html>
